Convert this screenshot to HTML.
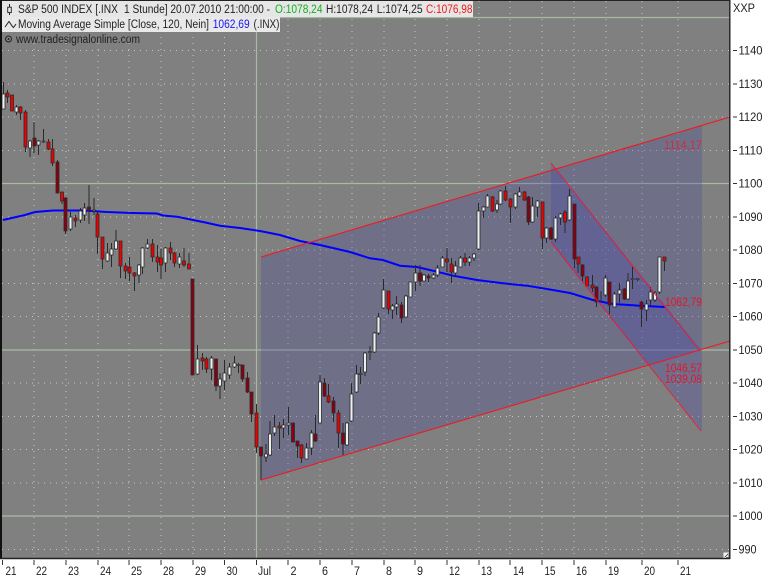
<!DOCTYPE html>
<html><head><meta charset="utf-8"><style>
html,body{margin:0;padding:0;background:#fff;width:770px;height:578px;overflow:hidden}
svg{display:block;filter:blur(.3px)}
text{font-family:"Liberation Sans",Arial,sans-serif;font-size:11.5px;fill:#222}
</style></head><body>
<svg width="770" height="578" viewBox="0 0 770 578" xmlns="http://www.w3.org/2000/svg">
<rect width="770" height="578" fill="#fff"/>
<rect x="2" y="1" width="727.5" height="557" fill="#808080"/>
<!-- dotted grid -->
<path d="M2 50.5H729M2 84H729M2 117H729M2 150.5H729M2 217H729M2 250H729M2 283.5H729M2 316.5H729M2 383H729M2 416.5H729M2 449.5H729M2 483H729M2 549.5H729" stroke="#c6c8c6" stroke-width="1" stroke-dasharray="1 5" fill="none"/>
<path d="M34 1V558M66 1V558M98 1V558M129 1V558M161 1V558M193 1V558M224.5 1V558M288 1V558M320 1V558M352 1V558M384 1V558M415 1V558M447 1V558M479 1V558M510 1V558M542 1V558M574 1V558M606 1V558M642 1V558M678 1V558" stroke="#c6c8c6" stroke-width="1" stroke-dasharray="1 5" fill="none"/>
<!-- solid grid -->
<path d="M2 17.5H729M2 183.5H729M2 350H729M2 516H729M256.5 1V558" stroke="#a9b9a6" stroke-width="1.2" fill="none"/>
<!-- channel fills -->
<polygon points="261,257 702,125 702,349 261,480" fill="rgb(60,60,160)" fill-opacity=".25"/>
<polygon points="551,163 702,351 702,431 551,242" fill="rgb(60,60,180)" fill-opacity=".25"/>
<!-- moving average -->
<path d="M3 220L25 215L35 212L53 210.5L63 210.5L83 210.5L107 212L133 213L157 213.5L163 215.5L177 216.7L193 220L203 222L220 225.7L240 228L260 231L280 235L300 241L320 245L350 252L370 258.3L383 260L400 265.7L417 267L437 271.7L453 275.7L477 280L503 283.3L527 285.7L547 289L570 293L593 300L613 304L640 305.7L665 307" fill="none" stroke="#0000ff" stroke-width="2"/>
<!-- wicks -->
<path fill="none" stroke="#2a2a2a" stroke-width="1" d="M3.5 82V109M7.5 90V103M12 95V111M16.5 105V115M20.5 106V120M25.5 110V152M30 140V157M34 122V153M38.5 140V155M43.5 129V143M48.5 139V150M52.5 139V166M57.5 160V193M62 192V204M65.5 197V234M70.5 212V231M75.5 215V227M80.5 208V223M84.5 203V221M89 185V224M94 198V215M97.5 212V254M102.5 237V269M107.5 243V262M111.5 243V267M116 230V250M120.5 241V278M125.5 263V279M129.5 257V281M134.5 272V291M139 264V283M142.5 247V274M147.5 239V249M152.5 239V262M157.5 245V272M161 249V279M165.5 247V272M170.5 242V260M174.5 252V267M179.5 253V268M184 248V267M189 253V269M192.5 279V375M197.5 345V375M202.5 353V370M206.5 357V373M211.5 356V380M216 359V391M220 373V399M224.5 360V390M229.5 363V379M234.5 356V368M238.5 363V373M242.5 365V382M247.5 372V393M251.5 392V422M256.5 404V453M261 447V480M266 444V462M270 421V456M274.5 415V436M279.5 422V449M283.5 419V438M288.5 407V435M293 423V442M297.5 441V458M301.5 444V463M306.5 443V459M311.5 430V455M315.5 415V442M320 375V423M324.5 378V397M328.5 384V403M333.5 397V422M338.5 410V448M343 423V455M347 422V446M351.5 383V422M356.5 365V393M360.5 367V384M365 352V376M370 346V360M374.5 332V353M378.5 313V335M383.5 279V309M388.5 291V314M392.5 304V319M396.5 296V315M401.5 302V323M406 295V317M410.5 282V297M415.5 265V291M420 265V286M424 274V281M428.5 274V282M433.5 273V279M437.5 265V277M442.5 256V267M447 248V272M451.5 258V283M455.5 261V275M460.5 256V267M465 253V266M469.5 256V266M474 253V261M478.5 203V250M483.5 206V218M487.5 194V207M492.5 196V212M497 200V213M500.5 190V205M505.5 186V201M510.5 198V223M515.5 193V209M519.5 187V197M524.5 191V201M528.5 196V225M532.5 197V223M537.5 200V217M542.5 202V249M546.5 227V243M551 227V240M555.5 216V242M560.5 213V225M565 210V233M569.5 189V221M574.5 204V268M578 257V273M582.5 264V282M587.5 276V286M592.5 275V292M596.5 286V307M601 291V302M605.5 275V297M609.5 282V314M614.5 292V307M619.5 283V303M624.5 288V300M628 273V300M632.5 267V289M637.5 278V281M641.5 301V327M646.5 300V321M650.5 287V305M655 291V302M659.5 257V294M664.5 257V271"/>
<!-- white bodies -->
<path fill="#eceef0" stroke="#2a2a2a" stroke-width=".8" d="M2 94h3V109h-3zM15 107h3V112h-3zM28.5 141h3V148h-3zM37 141h3V145h-3zM42 141h3V142h-3zM69 217h3V229h-3zM79 211h3V220h-3zM83 208h3V215h-3zM92.500 210h3V211h-3zM106 253h3V261h-3zM110 249h3V255h-3zM114.500 241h3V249h-3zM137.500 265h3V275h-3zM141 248h3V267h-3zM146 244h3V248h-3zM164 248h3V263h-3zM178 257h3V264h-3zM196 359h3V374h-3zM210 358h3V369h-3zM218.500 379h3V386h-3zM223 373h3V381h-3zM228 367h3V375h-3zM233 363h3V367h-3zM237 364.500h3V365.500h-3zM264.500 454h3V457h-3zM268.500 434h3V455h-3zM273 427h3V433h-3zM282 425h3V428h-3zM287 423h3V425h-3zM305 448h3V459h-3zM310 433h3V448h-3zM318.500 382h3V423h-3zM345.500 423h3V445h-3zM350 394h3V421h-3zM355 374h3V392h-3zM359 373.500h3V374.500h-3zM363.500 353h3V372h-3zM368.500 351.500h3V352.500h-3zM373 333h3V352h-3zM377 317h3V333h-3zM382 290h3V308h-3zM391 306h3V310h-3zM395 304h3V307h-3zM404.500 296h3V317h-3zM409 282h3V297h-3zM414 273h3V282h-3zM422.500 275h3V281h-3zM432 275h3V278h-3zM436 268h3V275h-3zM441 258h3V267h-3zM454 266h3V273h-3zM459 258h3V267h-3zM468 258h3V262h-3zM472.500 254h3V258h-3zM477 211h3V249h-3zM482 207h3V211h-3zM486 196h3V207h-3zM495.500 204h3V210h-3zM499 191h3V204h-3zM514 194h3V207h-3zM518 192h3V196h-3zM531 206h3V222h-3zM536 201h3V207h-3zM545 228h3V238h-3zM554 218h3V239h-3zM559 214h3V218h-3zM568 196h3V220h-3zM604 278h3V295h-3zM613 294h3V307h-3zM618 290h3V294h-3zM626.500 281h3V299h-3zM631 278.500h3V279.500h-3zM636 278.500h3V279.500h-3zM645 304h3V310h-3zM649 292h3V300h-3zM653.500 293h3V300h-3zM658 257h3V292h-3z"/>
<!-- bright red bodies -->
<path fill="#f00000" stroke="#2a2a2a" stroke-width=".8" d="M6 93h3V97h-3zM10.500 95h3V111h-3zM19 107h3V113h-3zM24 112h3V147h-3zM47 142h3V149h-3zM51 149h3V163h-3zM60.500 192h3V201h-3zM74 218h3V221h-3zM96 214h3V237h-3zM101 237h3V259h-3zM119 241h3V266h-3zM124 266h3V271h-3zM128 267h3V273h-3zM133 273h3V276h-3zM151 244h3V257h-3zM156 257h3V262h-3zM159.500 258h3V265h-3zM169 248h3V253h-3zM173 253h3V263h-3zM182.500 261h3V265h-3zM187.500 264h3V269h-3zM201 358h3V361h-3zM205 359h3V369h-3zM255 413h3V447h-3zM278 426h3V428h-3zM300 445h3V458h-3zM327 396h3V402h-3zM337 413h3V433h-3zM387 291h3V309h-3zM419 273h3V281h-3zM450 264h3V272h-3zM463.500 258h3V262h-3zM445.500 259h3V262h-3zM491 197h3V211h-3zM504 191h3V200h-3zM509 199h3V207h-3zM523 192h3V200h-3zM541 202h3V238h-3zM563.500 212h3V222h-3zM577 257h3V264h-3zM585.500 277h3V286h-3zM591 285h3V288h-3zM663 257h3V261h-3z"/>
<!-- dark red bodies -->
<path fill="#8a0012" stroke="#2a2a2a" stroke-width=".8" d="M33 138h3V146h-3zM56 162h3V193h-3zM64 198h3V231h-3zM87.500 207h3V210h-3zM191 279h3V375h-3zM214.500 359h3V386h-3zM241 365h3V379h-3zM246 378h3V392h-3zM250 392h3V414h-3zM259.500 447h3V456h-3zM291.500 423h3V442h-3zM296 441h3V446h-3zM314 434h3V441h-3zM323 383h3V396h-3zM332 401h3V413h-3zM341.500 433h3V444h-3zM400 305h3V318h-3zM418.500 273h3V281h-3zM427 276h3V278h-3zM527 197h3V222h-3zM549.500 228h3V239h-3zM573 204h3V259h-3zM581 265h3V276h-3zM595 287h3V302h-3zM608 282h3V305h-3zM623 289h3V299h-3zM640 302h3V309h-3z"/>
<!-- channel lines -->
<path d="M261 480L730 341M261 257L730 117" stroke="#f01820" stroke-width="1.1" fill="none"/>
<path d="M551 163L700 351M551 242L701 431" stroke="#f01830" stroke-width=".9" fill="none"/>
<!-- red labels -->
<text x="664" y="149" textLength="38" lengthAdjust="spacingAndGlyphs" style="fill:#cc3040">1114,17</text>
<text x="665" y="306" textLength="37" lengthAdjust="spacingAndGlyphs" style="fill:#e01828">1062,79</text>
<text x="665" y="372" textLength="37" lengthAdjust="spacingAndGlyphs" style="fill:#e01828">1046,57</text>
<text x="665" y="383" textLength="37" lengthAdjust="spacingAndGlyphs" style="fill:#e01828">1039,08</text>
<!-- header -->
<rect x="2" y="1" width="471" height="16" fill="#e6e6e6"/>
<rect x="2" y="17" width="278" height="15" fill="#e9e9e9"/>
<path d="M9.500 4V15" stroke="#222" stroke-width="1"/>
<rect x="7.700" y="7.200" width="3.600" height="5.300" fill="#e6e6e6" stroke="#222" stroke-width=".9"/>
<path d="M5 27L9 21.500L12.500 26.500L13.500 27.500L16 24" fill="none" stroke="#222" stroke-width="1"/>
<text x="18" y="13" textLength="100" lengthAdjust="spacingAndGlyphs">S&amp;P 500 INDEX [.INX</text>
<text x="124" y="13" textLength="146" lengthAdjust="spacingAndGlyphs">1 Stunde] 20.07.2010 21:00:00 -</text>
<text x="275" y="13" textLength="47.500" lengthAdjust="spacingAndGlyphs" style="fill:#10b020">O:1078,24</text>
<text x="326" y="13" textLength="47" lengthAdjust="spacingAndGlyphs">H:1078,24</text>
<text x="376.700" y="13" textLength="46" lengthAdjust="spacingAndGlyphs">L:1074,25</text>
<text x="426" y="13" textLength="46.500" lengthAdjust="spacingAndGlyphs" style="fill:#f01818">C:1076,98</text>
<text x="18" y="28" textLength="191" lengthAdjust="spacingAndGlyphs">Moving Average Simple [Close, 120, Nein]</text>
<text x="212.700" y="28" textLength="37" lengthAdjust="spacingAndGlyphs" style="fill:#1818f0">1062,69</text>
<text x="253.500" y="28" textLength="26" lengthAdjust="spacingAndGlyphs">(.INX)</text>
<circle cx="8.500" cy="39" r="3" fill="none" stroke="#222" stroke-width="1"/>
<circle cx="8.500" cy="39" r="1" fill="#222"/>
<text x="16" y="43" textLength="124" lengthAdjust="spacingAndGlyphs">www.tradesignalonline.com</text>
<!-- frame -->
<path d="M1 0V559" stroke="#111" stroke-width="2"/>
<path d="M0 558.500H730" stroke="#222" stroke-width="1.6"/>
<path d="M2 .5H730" stroke="#222" stroke-width="1"/>
<path d="M729.800 0V559" stroke="#222" stroke-width="1.4"/>
<rect x="723.500" y="552.500" width="5.500" height="5.500" fill="#f4f4f4"/>
<path d="M724.500 557.500L728.500 553.500M726 557.500h3v-3" stroke="#333" stroke-width=".8" fill="none"/>
<!-- y axis -->
<path d="M733 50.500h4M733 84h4M733 117h4M733 150.500h4M733 183.500h4M733 217h4M733 250h4M733 283.500h4M733 316.500h4M733 350h4M733 383h4M733 416.500h4M733 449.500h4M733 483h4M733 516h4M733 549.500h4" stroke="#333" stroke-width="1"/>
<text x="733" y="12" textLength="22" lengthAdjust="spacingAndGlyphs">XXP</text>
<text x="738.500" y="54.500" textLength="24" lengthAdjust="spacingAndGlyphs">1140</text>
<text x="738.500" y="88" textLength="24" lengthAdjust="spacingAndGlyphs">1130</text>
<text x="738.500" y="121" textLength="24" lengthAdjust="spacingAndGlyphs">1120</text>
<text x="738.500" y="154.500" textLength="24" lengthAdjust="spacingAndGlyphs">1110</text>
<text x="738.500" y="187.500" textLength="24" lengthAdjust="spacingAndGlyphs">1100</text>
<text x="738.500" y="221" textLength="24" lengthAdjust="spacingAndGlyphs">1090</text>
<text x="738.500" y="254" textLength="24" lengthAdjust="spacingAndGlyphs">1080</text>
<text x="738.500" y="287.500" textLength="24" lengthAdjust="spacingAndGlyphs">1070</text>
<text x="738.500" y="320.500" textLength="24" lengthAdjust="spacingAndGlyphs">1060</text>
<text x="738.500" y="354" textLength="24" lengthAdjust="spacingAndGlyphs">1050</text>
<text x="738.500" y="387" textLength="24" lengthAdjust="spacingAndGlyphs">1040</text>
<text x="738.500" y="420.500" textLength="24" lengthAdjust="spacingAndGlyphs">1030</text>
<text x="738.500" y="453.500" textLength="24" lengthAdjust="spacingAndGlyphs">1020</text>
<text x="738.500" y="487" textLength="24" lengthAdjust="spacingAndGlyphs">1010</text>
<text x="738.500" y="520" textLength="24" lengthAdjust="spacingAndGlyphs">1000</text>
<text x="738.500" y="553.500" textLength="18" lengthAdjust="spacingAndGlyphs">990</text>
<!-- x axis -->
<path d="M2.500 560v5M34 560v5M66 560v5M98 560v5M129 560v5M161 560v5M193 560v5M224.500 560v5M256.500 560v5M288 560v5M320 560v5M352 560v5M384 560v5M415 560v5M447 560v5M479 560v5M510 560v5M542 560v5M574 560v5M606 560v5M642 560v5M678 560v5" stroke="#333" stroke-width="1"/>
<text x="5.500" y="575" textLength="11" lengthAdjust="spacingAndGlyphs">21</text>
<text x="36" y="575" textLength="11" lengthAdjust="spacingAndGlyphs">22</text>
<text x="68" y="575" textLength="11" lengthAdjust="spacingAndGlyphs">23</text>
<text x="100" y="575" textLength="11" lengthAdjust="spacingAndGlyphs">24</text>
<text x="131" y="575" textLength="11" lengthAdjust="spacingAndGlyphs">25</text>
<text x="163" y="575" textLength="11" lengthAdjust="spacingAndGlyphs">28</text>
<text x="195" y="575" textLength="11" lengthAdjust="spacingAndGlyphs">29</text>
<text x="226.500" y="575" textLength="11" lengthAdjust="spacingAndGlyphs">30</text>
<text x="258" y="575" textLength="13" lengthAdjust="spacingAndGlyphs">Jul</text>
<text x="290.500" y="575" textLength="6" lengthAdjust="spacingAndGlyphs">2</text>
<text x="322" y="575" textLength="6" lengthAdjust="spacingAndGlyphs">6</text>
<text x="354" y="575" textLength="6" lengthAdjust="spacingAndGlyphs">7</text>
<text x="386" y="575" textLength="6" lengthAdjust="spacingAndGlyphs">8</text>
<text x="417" y="575" textLength="6" lengthAdjust="spacingAndGlyphs">9</text>
<text x="449" y="575" textLength="11" lengthAdjust="spacingAndGlyphs">12</text>
<text x="481" y="575" textLength="11" lengthAdjust="spacingAndGlyphs">13</text>
<text x="513" y="575" textLength="11" lengthAdjust="spacingAndGlyphs">14</text>
<text x="544.500" y="575" textLength="11" lengthAdjust="spacingAndGlyphs">15</text>
<text x="576" y="575" textLength="11" lengthAdjust="spacingAndGlyphs">16</text>
<text x="608" y="575" textLength="11" lengthAdjust="spacingAndGlyphs">19</text>
<text x="644" y="575" textLength="11" lengthAdjust="spacingAndGlyphs">20</text>
<text x="680" y="575" textLength="11" lengthAdjust="spacingAndGlyphs">21</text>
</svg>
</body></html>
